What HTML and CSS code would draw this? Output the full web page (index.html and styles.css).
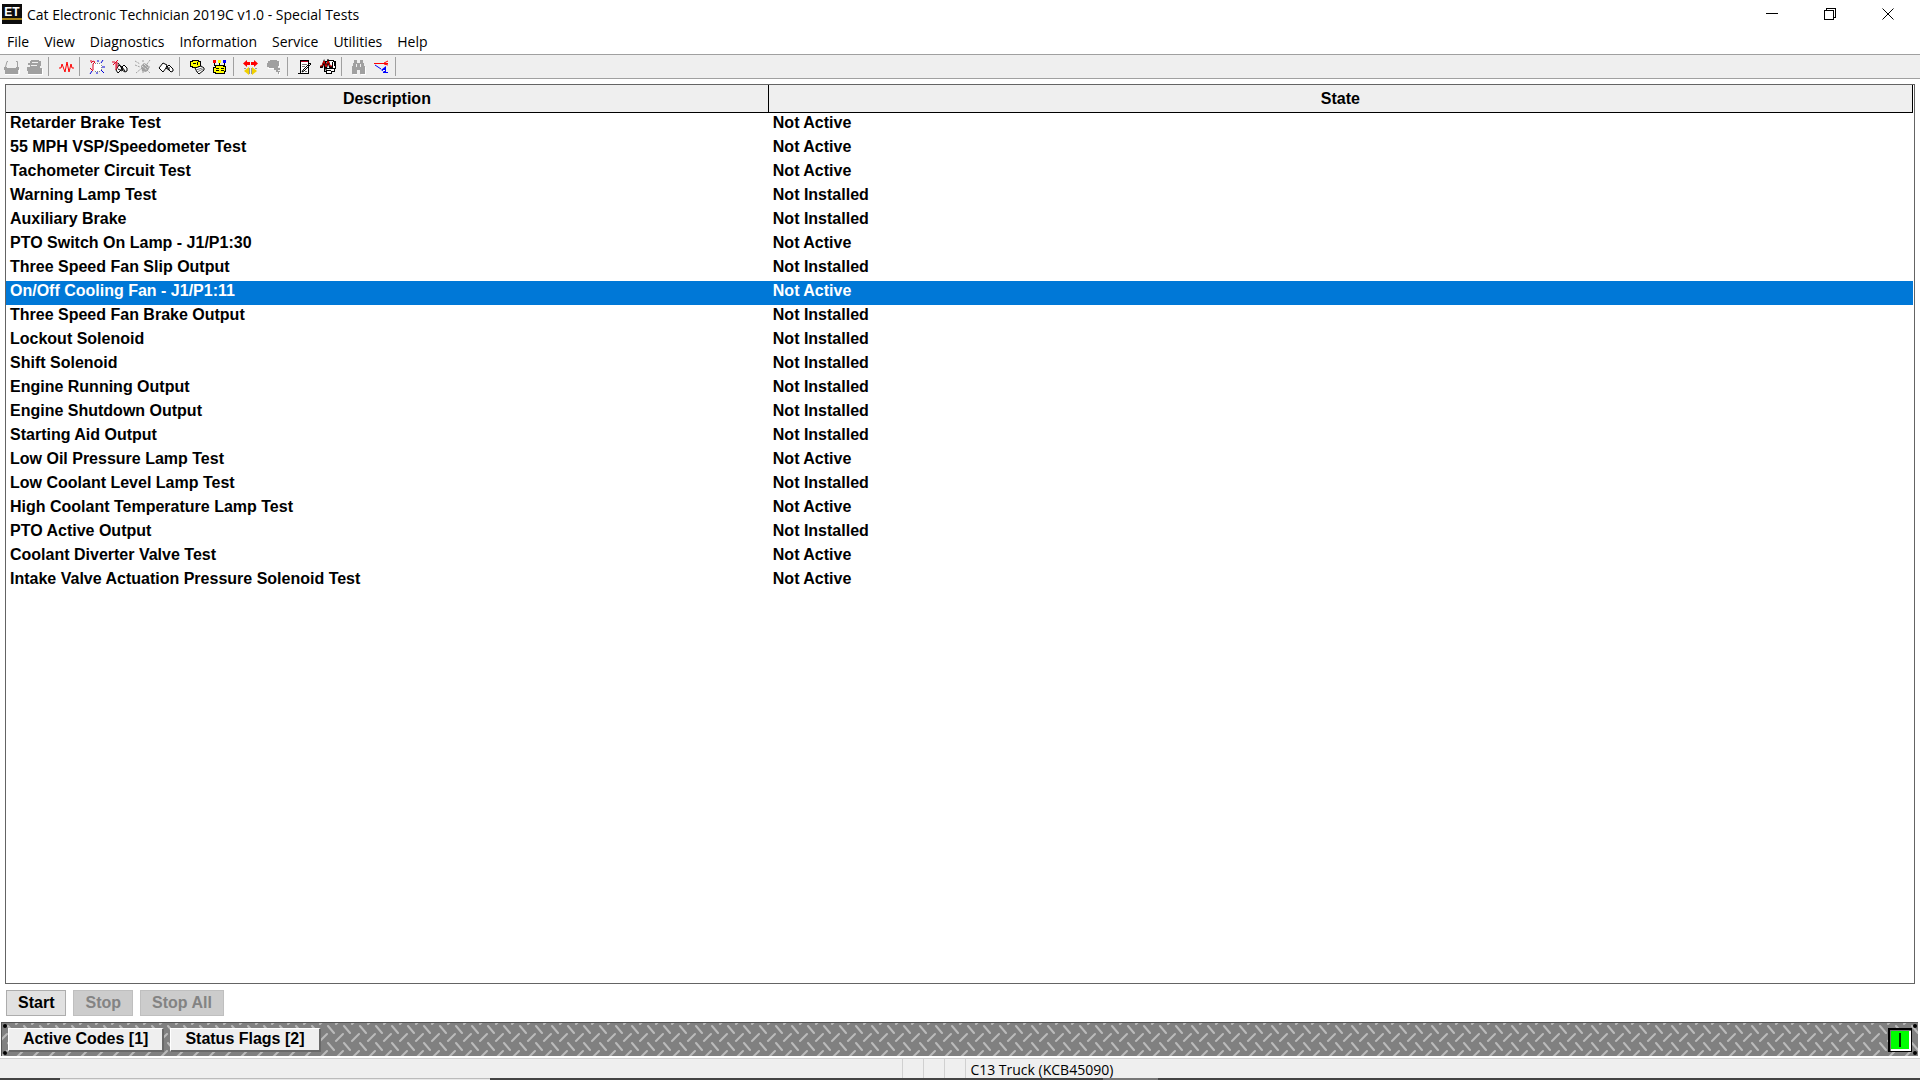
FILE: index.html
```html
<!DOCTYPE html>
<html lang="en">
<head>
    <meta charset="UTF-8">
    <meta name="viewport" content="width=device-width, initial-scale=1.0">
    <title>Cat Electronic Technician 2019C v1.0 - Special Tests</title>
    <link rel="stylesheet" href="styles.css">
</head>
<body>

<header class="titlebar">
    <svg class="app-icon" width="20" height="20" viewBox="0 0 20 20">
        <rect width="20" height="20" fill="#0c0c0c"/>
        <rect y="14" width="20" height="2" fill="#a88418"/>
        <text x="10" y="12" text-anchor="middle">ET</text>
    </svg>
    <h1>Cat Electronic Technician 2019C v1.0 - Special Tests</h1>
    <div class="window-controls">
        <button aria-label="Minimize"><svg width="12" height="12"><path d="M0 5.5h12"/></svg></button>
        <button aria-label="Restore"><svg width="12" height="12"><path d="M.5 2.5h9v9h-9zM2.5 2V.5h9v9H10"/></svg></button>
        <button aria-label="Close"><svg class="smooth" width="12" height="12"><path d="M.5.5l11 11M11.5.5l-11 11"/></svg></button>
    </div>
</header>

<nav class="menubar">
    <button>File</button>
    <button>View</button>
    <button>Diagnostics</button>
    <button>Information</button>
    <button>Service</button>
    <button>Utilities</button>
    <button>Help</button>
</nav>

<div class="toolbar">
    <button aria-label="Print" disabled><svg viewBox="0 0 17 16">
        <path fill="#a0a0a0" d="M0 8h3v1h9V8h3v3h-1v4H1v-4H0z"/>
        <path class="smooth" stroke="#a0a0a0" d="M4 2.5H3L1.5 8M12 2.5h1.5V8"/>
        <path stroke="#fff" d="M1 15.5h14M15.5 10v5"/>
    </svg></button>
    <button aria-label="Print preview" disabled><svg viewBox="0 0 17 16">
        <path fill="#a0a0a0" d="M4 1h8v1h2v5h-1v2h2v6H1v-3H0V8h3V6H1V4h2V2h1z"/>
        <path stroke="#efefef" d="M5 3.5h6M4 6.5h6"/>
        <path stroke="#fff" d="M1 15.5h15M15.5 10v5"/>
    </svg></button>
    <span class="separator"></span>
    <button aria-label="Status"><svg viewBox="0 0 17 16">
        <path class="smooth" stroke="#f00" d="M1 9h2l1-4 3 8 2-10 2 10 2-8 1 4h2"/>
    </svg></button>
    <span class="separator"></span>
    <button aria-label="Active diagnostic codes"><svg viewBox="0 0 17 16">
        <path fill="#fff" d="M5 4h6l2 3-1 4-4 2-4-3z"/>
        <path class="smooth" stroke="#e00020" d="M1 2h2M2 4l2-2 2 1-2 2v6M1 9l3 3"/>
        <path stroke="#888" stroke-dasharray="1 1" d="M6 4.5h5M12.5 6v5M6 12.5h5"/>
        <path class="smooth" stroke="#0000d8" d="M9 1v2M14 1l-2 3M13 8h3M12 11l3 3M8 13v2M3 12l-2 3"/>
    </svg></button>
    <button aria-label="Logged diagnostic codes"><svg viewBox="0 0 17 16">
        <path class="smooth" stroke="#000" fill="#fff" d="M4 11l3-5 3 2-1 3-3 3zM10 8l2-2 3 3v3l-2 1-3-2z"/>
        <path class="smooth" stroke="#000" d="M6 4l5 7M6 10l4 2M10 8l3 4"/>
        <path class="smooth" stroke="#e00020" d="M0 3h3M1 6l3-3 2-2M4 3v8M5 3v6"/>
    </svg></button>
    <button aria-label="Active events" disabled><svg viewBox="0 0 17 16">
        <path class="smooth" fill="#a0a0a0" d="M6 7l3-3 4 2 1 4-3 3-4-1z"/>
        <path class="smooth" stroke="#a0a0a0" stroke-dasharray="2 1" d="M0 2l5 3M0 6l5 2M8 1v3M15 1l-3 4M13 8h3M12 11l3 3M8 12v3M7 9l-6 5"/>
        <path class="smooth" stroke="#fff" stroke-dasharray="1 1" d="M7 7l5 4M9 5l4 4"/>
    </svg></button>
    <button aria-label="Logged events"><svg viewBox="0 0 17 16">
        <path class="smooth" stroke="#000" fill="#fff" d="M1 9l4-5 4 2-1 3-3 4zM9 8l2-2 2 2 2 2v2l-2 1-2-2z"/>
        <path class="smooth" stroke="#000" d="M8 9l3 2V8"/>
    </svg></button>
    <span class="separator"></span>
    <button aria-label="Configuration"><svg viewBox="0 0 17 16">
        <path fill="#ff0" stroke="#000" d="M1.5 2.5h2v-1h6v1h2v5h-2v1h-6v-1h-2z"/>
        <path stroke="#000" d="M4 4.5h3M8.5 3v3"/>
        <path class="smooth" fill="#fff" stroke="#000" d="M6 9l6-2 3 2v2l-5 4-2-2z"/>
        <path class="smooth" stroke="#777" d="M7 11l6-2M8 13l6-3"/>
    </svg></button>
    <button aria-label="Calibrations"><svg viewBox="0 0 17 16">
        <path fill="#f00" d="M1 1h3v3H1z"/><path fill="#ff0" d="M6 1h3v3H6z"/><path fill="#00f" d="M11 1h3v3h-3z"/>
        <path stroke="#000" d="M2.5 4v2h2M7.5 4v3M12.5 4v2h-2"/>
        <path fill="#ff0" stroke="#000" d="M3.5 6.5h8v1h2v5h-1v2h-9v-1h-2v-5h2z"/>
        <path stroke="#000" d="M4 9.5h3M4 11.5h3M9 9.5h3M9 11.5h3"/>
    </svg></button>
    <span class="separator"></span>
    <button aria-label="Data link"><svg viewBox="0 0 17 16">
        <path class="smooth" fill="#f00" d="M0 4.5L4 1v2h3v3H4v2zM15 4.5L11 1v2H8v3h3v2z"/>
        <path class="smooth" fill="#f0d000" d="M1 12l5-4v8zM14 12L9 8v8z"/>
        <path stroke="#999" d="M6.5 9v6M8.5 9v6M1 9.5h2M12 9.5h2"/>
    </svg></button>
    <button aria-label="Select" disabled><svg viewBox="0 0 17 16">
        <path fill="#a0a0a0" d="M2 2h2V1h7v1h2v5h-1v2h2v2h-2v1h2v3h-2v-2h-2v-2H8V9H3V8H1V4h1z"/>
        <path stroke="#fff" d="M13.5 3v5M2 9.5h6M13.5 13v3"/>
    </svg></button>
    <span class="separator"></span>
    <button aria-label="Report"><svg viewBox="0 0 17 16">
        <path fill="#fff" stroke="#000" d="M3.5 1.5h8v13h-8z"/>
        <path stroke="#b00020" d="M4 2.5h7"/>
        <path stroke="#777" d="M5 5.5h5M5 7.5h3M8 12.5h2"/>
        <path class="smooth" stroke="#000" d="M14 5l-7 7-2 1 1-2 7-7z"/>
        <path stroke="#000" d="M1 14.5h3"/>
    </svg></button>
    <button aria-label="Data logger"><svg viewBox="0 0 17 16">
        <path fill="#fff" stroke="#000" d="M5.5 2.5h3v-1h5v1h2v7h-1v3h-3v2h-5v-2h-2z"/>
        <path stroke="#000" d="M6 9.5h8M6 11.5h5M12.5 3v7M14.5 3v4"/>
        <path class="smooth" stroke="#000" stroke-width="2" d="M0 8h2l2-5 2 6 2-7 2 6h2"/>
        <path class="smooth" stroke="#e00000" d="M0 7h2l2-5 2 6 2-6 2 5h2"/>
    </svg></button>
    <span class="separator"></span>
    <button aria-label="Find" disabled><svg viewBox="0 0 17 16">
        <path fill="#a0a0a0" d="M3 1h3v3h3V1h3v3h1v3h1v8H9v-4H6v4H1V7h1V4h1z"/>
        <path stroke="#efefef" d="M5.5 5v3M9.5 5v3"/>
        <path stroke="#fff" d="M2 15.5h4M10 15.5h5M14.5 8v7"/>
    </svg></button>
    <button aria-label="Throttle position"><svg viewBox="0 0 17 16">
        <path stroke="#f00" d="M0 4.5h14"/>
        <path class="smooth" stroke="#f00" d="M10 4l4-2M10 5l4 1"/>
        <path class="smooth" stroke="#00f" d="M1 6l6 4"/>
        <path class="smooth" fill="#00f" d="M12 7v7l-5-3z"/>
        <path stroke="#00f" d="M9 13.5h5"/>
        <path stroke="#fff" d="M9 11.5h2"/>
    </svg></button>
    <span class="separator"></span>
</div>

<main class="content">
    <div class="test-list">
        <table>
            <thead>
                <tr><th class="description">Description</th><th>State</th></tr>
            </thead>
            <tbody>
                <tr><td>Retarder Brake Test</td><td>Not Active</td></tr>
                <tr><td>55 MPH VSP/Speedometer Test</td><td>Not Active</td></tr>
                <tr><td>Tachometer Circuit Test</td><td>Not Active</td></tr>
                <tr><td>Warning Lamp Test</td><td>Not Installed</td></tr>
                <tr><td>Auxiliary Brake</td><td>Not Installed</td></tr>
                <tr><td>PTO Switch On Lamp - J1/P1:30</td><td>Not Active</td></tr>
                <tr><td>Three Speed Fan Slip Output</td><td>Not Installed</td></tr>
                <tr class="selected"><td>On/Off Cooling Fan - J1/P1:11</td><td>Not Active</td></tr>
                <tr><td>Three Speed Fan Brake Output</td><td>Not Installed</td></tr>
                <tr><td>Lockout Solenoid</td><td>Not Installed</td></tr>
                <tr><td>Shift Solenoid</td><td>Not Installed</td></tr>
                <tr><td>Engine Running Output</td><td>Not Installed</td></tr>
                <tr><td>Engine Shutdown Output</td><td>Not Installed</td></tr>
                <tr><td>Starting Aid Output</td><td>Not Installed</td></tr>
                <tr><td>Low Oil Pressure Lamp Test</td><td>Not Active</td></tr>
                <tr><td>Low Coolant Level Lamp Test</td><td>Not Installed</td></tr>
                <tr><td>High Coolant Temperature Lamp Test</td><td>Not Active</td></tr>
                <tr><td>PTO Active Output</td><td>Not Installed</td></tr>
                <tr><td>Coolant Diverter Valve Test</td><td>Not Active</td></tr>
                <tr><td>Intake Valve Actuation Pressure Solenoid Test</td><td>Not Active</td></tr>
            </tbody>
        </table>
    </div>
    <div class="actions">
        <button>Start</button>
        <button disabled>Stop</button>
        <button disabled>Stop All</button>
    </div>
</main>

<div class="plate">
    <div class="rivets"><i></i><i></i></div>
    <button class="plate-button">Active Codes [1]</button>
    <button class="plate-button">Status Flags [2]</button>
    <button class="indicator" aria-label="Connected"><svg width="20" height="20"><rect x="9" y="3" width="2" height="14"/></svg></button>
    <div class="rivets"><i></i><i></i></div>
</div>

<footer class="statusbar">
    <span class="message"></span>
    <span class="cell"></span>
    <span class="cell"></span>
    <span class="cell"></span>
    <span class="device">C13 Truck (KCB45090)</span>
</footer>
<div class="taskbar-edge"><i></i><i></i><i></i></div>

</body>
</html>
```
FILE: styles.css
```css
* {
    box-sizing: border-box;
}
body {
    margin: 0;
    min-height: 100vh;
    display: flex;
    flex-direction: column;
    background-color: #fff;
    color: #000;
    font-family: "Open Sans", sans-serif;
    font-size: 14px;
}
button {
    margin: 0;
    padding: 0;
    border: none;
    background: none;
    color: inherit;
    font: inherit;
}
svg {
    display: block;
    fill: none;
    shape-rendering: crispEdges;
}
.smooth {
    shape-rendering: auto;
}

/* title and menu */
.titlebar {
    display: flex;
    align-items: center;
    height: 28px;
    padding: 0 3px 0 2px;
}
.titlebar h1 {
    margin: 0 0 0 5px;
    font-size: 14px;
    font-weight: normal;
}
.app-icon text {
    fill: #fff;
    font: bold 12px "Liberation Sans", Arial, sans-serif;
}
.window-controls {
    display: flex;
    margin-left: auto;
}
.window-controls button {
    width: 58px;
    height: 28px;
    padding: 0 23px;
}
.window-controls svg {
    stroke: #000;
}
.menubar {
    display: flex;
    align-items: center;
    gap: 15px;
    height: 26px;
    padding: 0 7px;
}

/* toolbar */
.toolbar {
    display: flex;
    align-items: center;
    height: 25px;
    padding-left: 1px;
    background-color: #efefef;
    border-top: 1px solid #a0a0a0;
    border-bottom: 1px solid #a0a0a0;
}
.toolbar button {
    width: 23px;
    height: 16px;
    padding: 0 3px;
}
.toolbar svg {
    width: 17px;
    height: 16px;
}
.separator {
    width: 7px;
    height: 19px;
    margin-left: 1px;
    border-left: 1px solid #a0a0a0;
}

/* test list */
.content {
    flex: 1;
    display: flex;
    flex-direction: column;
    padding: 5px 5px 6px;
    font-family: "Liberation Sans", Arial, sans-serif;
    font-size: 16px;
    font-weight: bold;
}
.test-list {
    flex: 1;
    padding-right: 1px;
    border: 1px solid #646464;
}
.test-list table {
    width: 100%;
    table-layout: fixed;
    border-collapse: separate;
    border-spacing: 0;
}
.test-list th {
    height: 28px;
    padding: 0;
    line-height: 27px;
    background-color: #efefef;
    border-right: 1px solid #000;
    border-bottom: 1px solid #000;
}
.test-list .description {
    width: 40%;
}
.test-list td {
    height: 24px;
    padding: 0 4px 4px;
    line-height: 20px;
}
.test-list .selected {
    background-color: #0078d7;
    color: #fff;
}
.actions {
    display: flex;
    gap: 7px;
    padding: 6px 1px 0;
}
.actions button {
    height: 26px;
    padding: 0 11px;
    background-color: #e1e1e1;
    border: 1px solid #adadad;
}
.actions button:disabled {
    background-color: #ccc;
    border-color: #bfbfbf;
    color: #838383;
}

/* diamond plate bar */
.plate {
    display: flex;
    align-items: center;
    gap: 6px;
    height: 34px;
    margin: 0 2px 0 1px;
    border-top: 1px solid #555;
    border-left: 1px solid #555;
    background-color: #808080;
    background-image: url("data:image/svg+xml,%3Csvg xmlns='http://www.w3.org/2000/svg' width='16' height='17'%3E%3Cpath d='M6 3l6 7M-2 18l7-7M14 18l7-7M-2 1l2-2M14 1l2-2' stroke='%23bababa' stroke-width='2' stroke-linecap='round'/%3E%3C/svg%3E");
}
.rivets {
    align-self: stretch;
    display: flex;
    flex-direction: column;
    justify-content: space-between;
    padding: 1px;
}
.rivets + .plate-button {
    margin-left: -6px;
}
.rivets i {
    width: 4px;
    height: 4px;
    border-radius: 50%;
    background-color: #000;
}
.plate-button {
    height: 24px;
    padding: 0 14px;
    background-color: #efefef;
    border: 1px solid #fff;
    border-right: 2px solid #696969;
    border-bottom: 2px solid #696969;
    font: bold 16px "Liberation Sans", Arial, sans-serif;
}
.indicator {
    width: 24px;
    height: 24px;
    margin: 0 -6px 0 auto;
    background-color: #0f0;
    border: 2px solid #000;
    border-right-width: 1px;
    border-bottom-width: 1px;
    box-shadow: inset 1px 1px #777, inset -2px -2px #fff;
}
.indicator rect {
    fill: #003000;
}

/* status bar */
.statusbar {
    display: flex;
    height: 20px;
    margin-top: 2px;
    background-color: #efefef;
    border-top: 1px solid #d0d0d0;
    line-height: 21px;
}
.message {
    width: 47%;
}
.cell {
    width: 21px;
    border-left: 1px solid #d0d0d0;
}
.device {
    flex: 1;
    padding-left: 4px;
    border-left: 1px solid #d0d0d0;
}
.taskbar-edge {
    display: flex;
    height: 2px;
    background-color: #444;
}
.taskbar-edge i:nth-child(1) {
    width: 60px;
}
.taskbar-edge i:nth-child(2) {
    width: 430px;
    background-color: #e8e8e8;
    border-top: 1px solid #bbb;
}
.taskbar-edge i:nth-child(3) {
    width: 55px;
    margin-left: 613px;
    background-color: #777;
}
```
